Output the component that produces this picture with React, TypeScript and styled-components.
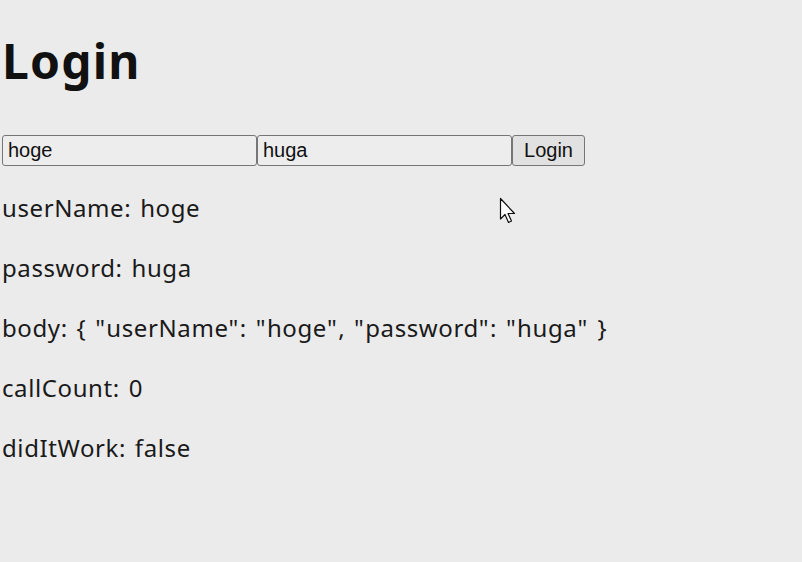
import React from "react";
import styled, { createGlobalStyle } from "styled-components";

const Global = createGlobalStyle`
  html, body { margin: 0; padding: 0; background: #ebebeb; }
  body { font-family: "Noto Sans", "DejaVu Sans", sans-serif; color: #111; }
`;

const Page = styled.div`
  position: relative;
  width: 802px;
  height: 562px;
  padding: 0 0 0 2px;
  box-sizing: border-box;
  overflow: hidden;
`;

const Title = styled.h1`
  margin: 0;
  padding-top: 25px;
  height: 72px;
  font-size: 48px;
  line-height: 72px;
  font-weight: 700;
  letter-spacing: 1.2px;
`;

const Form = styled.div`
  display: flex;
  align-items: center;
  margin-top: 38px;
  height: 31px;
`;

const Field = styled.input`
  box-sizing: border-box;
  width: 255px;
  height: 31px;
  margin: 0;
  padding: 0 5px;
  border: 1px solid #767676;
  border-radius: 3px;
  background: #ededed;
  font-family: "Liberation Sans", Arial, sans-serif;
  font-size: 20px;
  color: #111;
  outline: none;
`;

const Button = styled.button`
  box-sizing: border-box;
  width: 73px;
  height: 31px;
  margin: 0;
  padding: 0;
  border: 1px solid #767676;
  border-radius: 3px;
  background: #e1e1e1;
  font-family: "Liberation Sans", Arial, sans-serif;
  font-size: 20px;
  color: #111;
`;

const Lines = styled.div`
  display: flex;
  flex-direction: column;
  gap: 24px;
  margin-top: 24px;
`;

const Line = styled.p`
  margin: 0;
  font-size: 24px;
  line-height: 36px;
  letter-spacing: 0.6px;
  word-spacing: 2px;
  color: #1a1a1a;
`;

const Quote = styled.span`
  letter-spacing: 1.4px;
`;

const Cursor = styled.svg`
  position: absolute;
  left: 499px;
  top: 197px;
`;

const q = <Quote>"</Quote>;

export default function App() {
  return (
    <>
      <Global />
      <Page>
        <Title>Login</Title>
        <Form>
          <Field defaultValue="hoge" />
          <Field defaultValue="huga" />
          <Button>Login</Button>
        </Form>
        <Lines>
          <Line>userName: hoge</Line>
          <Line>password: huga</Line>
          <Line>
            body: {'{'} {q}userName{q}: {q}hoge{q}, {q}password{q}: {q}huga{q} {'}'}
          </Line>
          <Line>callCount: 0</Line>
          <Line>didItWork: false</Line>
        </Lines>
        <Cursor width="20" height="30" viewBox="0 0 20 30">
          <path d="M1.5 1.5 L1.5 22 L6 17.5 L9.5 25.5 L12.5 24 L9 16.5 L15.5 16.5 Z" fill="#fff" stroke="#111" strokeWidth="1.2" strokeLinejoin="round" />
        </Cursor>
      </Page>
    </>
  );
}
